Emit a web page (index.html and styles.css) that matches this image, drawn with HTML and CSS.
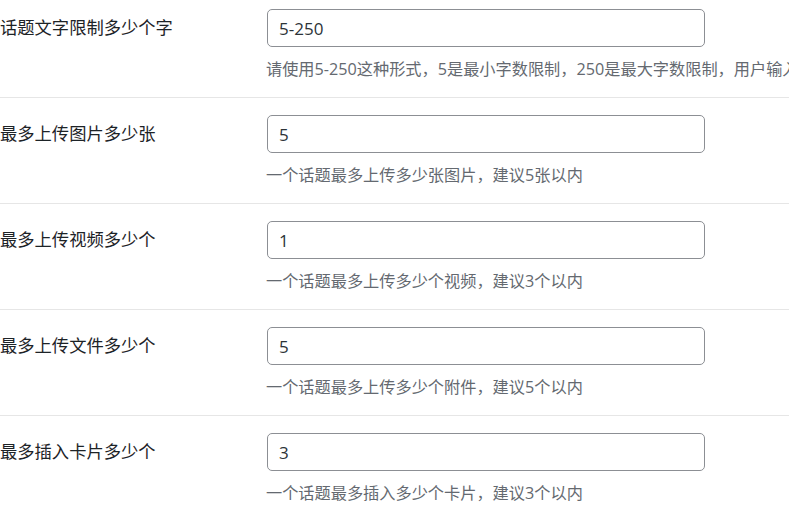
FILE: index.html
```html
<!DOCTYPE html>
<html lang="zh-CN">
<head>
<meta charset="utf-8">
<title>话题设置</title>
<link rel="stylesheet" href="styles.css">
</head>
<body>
<div class="form-table">
  <div class="row">
    <div class="label">话题文字限制多少个字</div>
    <div class="field">
      <input class="text-input" type="text" value="5-250">
      <p class="description">请使用5-250这种形式，5是最小字数限制，250是最大字数限制，用户输入的字数不在这个范围内将无法发布</p>
    </div>
  </div>
  <div class="row">
    <div class="label">最多上传图片多少张</div>
    <div class="field">
      <input class="text-input" type="text" value="5">
      <p class="description">一个话题最多上传多少张图片，建议5张以内</p>
    </div>
  </div>
  <div class="row">
    <div class="label">最多上传视频多少个</div>
    <div class="field">
      <input class="text-input" type="text" value="1">
      <p class="description">一个话题最多上传多少个视频，建议3个以内</p>
    </div>
  </div>
  <div class="row">
    <div class="label">最多上传文件多少个</div>
    <div class="field">
      <input class="text-input" type="text" value="5">
      <p class="description">一个话题最多上传多少个附件，建议5个以内</p>
    </div>
  </div>
  <div class="row">
    <div class="label">最多插入卡片多少个</div>
    <div class="field">
      <input class="text-input" type="text" value="3">
      <p class="description">一个话题最多插入多少个卡片，建议3个以内</p>
    </div>
  </div>
</div>
</body>
</html>
```

FILE: styles.css
```css
html, body {
  margin: 0;
  padding: 0;
  background: #ffffff;
  overflow: hidden;
}

body {
  font-family: "Open Sans", "Noto Sans CJK SC", sans-serif;
  color: #1d2327;
}

.form-table {
  margin-top: -8px;
  width: 789px;
}

.row {
  display: flex;
  border-bottom: 1px solid #e6e6e6;
}

.label {
  width: 267px;
  flex: none;
  padding-top: 24px;
  font-size: 17.3px;
  line-height: 23px;
  color: #1d2327;
  white-space: nowrap;
}

.field {
  flex: 1;
  min-width: 0;
  padding-top: 17px;
  padding-bottom: 16px;
}

.text-input {
  display: block;
  box-sizing: border-box;
  width: 438px;
  height: 38px;
  margin: 0;
  padding: 0 11px;
  border: 1px solid #8c8f94;
  border-radius: 5px;
  background: #fff;
  font-family: "Open Sans", "Noto Sans CJK SC", sans-serif;
  font-size: 17px;
  color: #2c3338;
  outline: none;
}

.description {
  margin: 10px 0 0 -1px;
  font-size: 16.2px;
  line-height: 24px;
  color: #646970;
  white-space: nowrap;
}
```
